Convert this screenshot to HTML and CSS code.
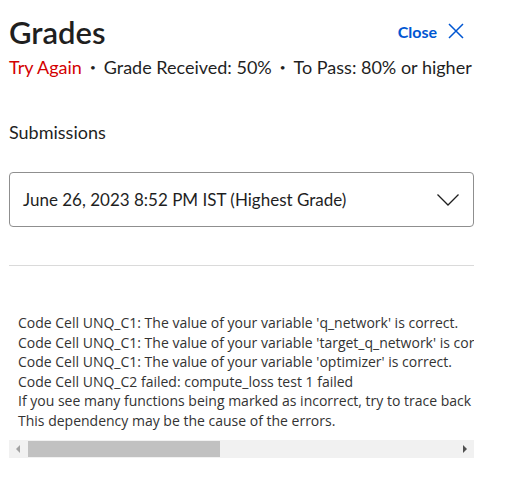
FILE: index.html
```html
<!DOCTYPE html>
<html lang="en">
<head>
<meta charset="utf-8">
<title>Grades</title>
<link rel="stylesheet" href="styles.css">
</head>
<body>
<div class="panel">
  <div class="header">
    <h1 class="title">Grades</h1>
    <button class="close">
      <span>Close</span>
      <svg class="close-icon" width="16" height="16" viewBox="0 0 16 16"><path d="M1 1 L15 15 M15 1 L1 15" stroke="#0056d2" stroke-width="1.5" fill="none"/></svg>
    </button>
  </div>
  <div class="meta">
    <span class="fail">Try Again</span>
    <span class="dot">•</span>
    <span>Grade Received: 50%</span>
    <span class="dot">•</span>
    <span>To Pass: 80% or higher</span>
  </div>

  <h2 class="section">Submissions</h2>

  <div class="select">
    <span>June 26, 2023 8:52 PM IST (Highest Grade)</span>
    <svg class="chevron" width="22" height="12" viewBox="0 0 22 12"><path d="M0.5 0.5 L11 11 L21.5 0.5" stroke="#1f1f1f" stroke-width="1.3" fill="none"/></svg>
  </div>

  <hr class="divider">

  <div class="output">
    <pre class="code">Code Cell UNQ_C1: The value of your variable 'q_network' is correct.
Code Cell UNQ_C1: The value of your variable 'target_q_network' is correct.
Code Cell UNQ_C1: The value of your variable 'optimizer' is correct.
Code Cell UNQ_C2 failed: compute_loss test 1 failed
If you see many functions being marked as incorrect, try to trace back your steps.
This dependency may be the cause of the errors.</pre>
    <div class="scrollbar">
      <div class="sb-btn"><span class="arrow-left"></span></div>
      <div class="sb-thumb"></div>
      <div class="sb-track"></div>
      <div class="sb-btn"><span class="arrow-right"></span></div>
    </div>
  </div>
</div>
</body>
</html>
```

FILE: styles.css
```css
* { box-sizing: border-box; }
body {
  margin: 0;
  background: #ffffff;
  font-family: "Source Sans Pro", "Lato", "Noto Sans", sans-serif;
  color: #1f1f1f;
}
.panel {
  width: 465px;
  margin-left: 9px;
  padding-top: 14px;
}
.header {
  display: flex;
  justify-content: space-between;
  align-items: center;
  height: 36px;
}
.title {
  margin: 0;
  font-size: 31px;
  font-weight: 600;
  line-height: 36px;
  color: #1f1f1f;
}
.close {
  display: flex;
  align-items: center;
  gap: 11px;
  margin-right: 10px;
  margin-top: -2px;
  padding: 0;
  border: none;
  background: none;
  font-family: inherit;
  font-size: 16px;
  font-weight: 700;
  color: #0056d2;
}
.meta {
  display: flex;
  align-items: center;
  gap: 8px;
  margin-top: 6px;
  font-size: 18px;
  line-height: 22px;
  white-space: nowrap;
}
.fail { color: #d30001; }
.dot { font-size: 10px; }
.section {
  margin: 43px 0 0;
  font-size: 18px;
  font-weight: 400;
  line-height: 22px;
}
.select {
  display: flex;
  justify-content: space-between;
  align-items: center;
  height: 55px;
  margin-top: 29px;
  padding: 0 14px 0 13px;
  border: 1px solid #8f8f8f;
  border-radius: 4px;
  font-size: 17px;
}
.divider {
  margin: 38px 0 0;
  border: none;
  border-top: 1px solid #dadada;
}
.output {
  margin-top: 47px;
}
.code {
  margin: 0;
  padding: 0 0 0 9px;
  overflow: hidden;
  white-space: pre;
  font-family: "Open Sans", sans-serif;
  font-size: 14px;
  line-height: 19.6px;
  color: #333333;
}
.scrollbar {
  display: flex;
  height: 18px;
  margin-top: 9px;
  background: #f1f1f1;
}
.sb-btn {
  width: 18px;
  display: flex;
  align-items: center;
  justify-content: center;
}
.sb-thumb {
  width: 192px;
  margin: 1px 0 1px 1px;
  background: #c1c1c1;
}
.sb-track { flex: 1; }
.arrow-left, .arrow-right {
  width: 0;
  height: 0;
  border-top: 4px solid transparent;
  border-bottom: 4px solid transparent;
}
.arrow-left { border-right: 4px solid #a3a3a3; }
.arrow-right { border-left: 4px solid #505050; }
```
